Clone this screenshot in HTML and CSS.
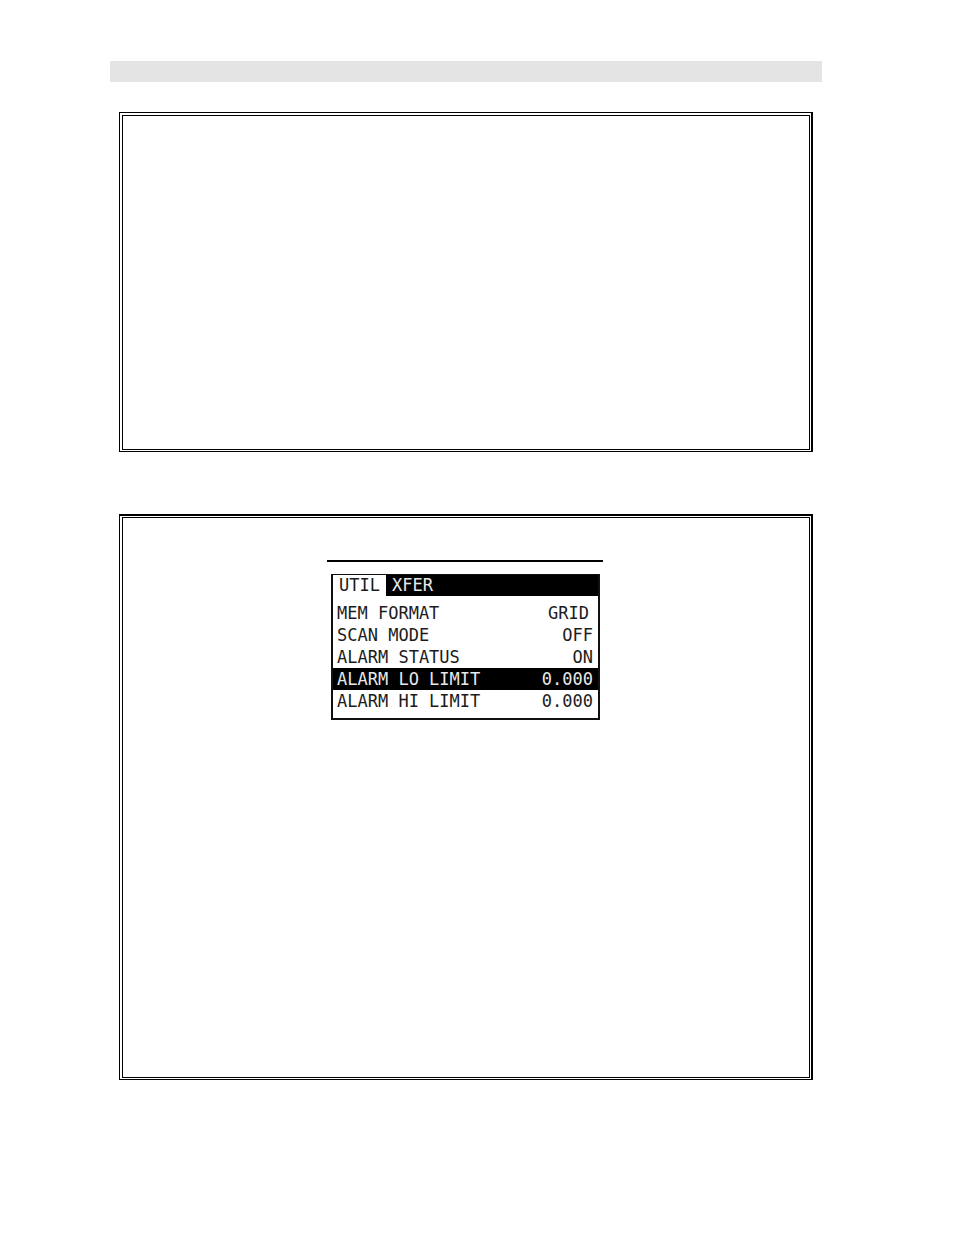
FILE: index.html
```html
<!DOCTYPE html>
<html lang="en">
<head>
    <meta charset="UTF-8">
    <meta name="viewport" content="width=device-width, initial-scale=1.0">
    <title>Alarm Limits</title>
    <link rel="stylesheet" href="styles.css">
</head>
<body>
    <header class="page-bar"></header>

    <main class="panels">
        <section class="panel">
            <div class="panel-body"></div>
        </section>

        <section class="panel panel-alarm">
            <div class="panel-body">
                <div class="figure">
                    <div class="screen">
                        <nav class="tabs">
                            <button type="button" class="tab active">UTIL</button>
                            <button type="button" class="tab">XFER</button>
                        </nav>
                        <table class="menu">
                            <tr><th scope="row">MEM FORMAT</th><td class="word">GRID</td></tr>
                            <tr><th scope="row">SCAN MODE</th><td>OFF</td></tr>
                            <tr><th scope="row">ALARM STATUS</th><td>ON</td></tr>
                            <tr class="selected"><th scope="row">ALARM LO LIMIT</th><td>0.000</td></tr>
                            <tr><th scope="row">ALARM HI LIMIT</th><td>0.000</td></tr>
                        </table>
                    </div>
                </div>
            </div>
        </section>
    </main>
</body>
</html>
```
FILE: styles.css
```css
* {
    box-sizing: border-box;
    margin: 0;
    padding: 0;
}

body {
    background: #fff;
    color: #1c1c1c;
    padding: 61px 132px 60px 110px;
    font-family: "DejaVu Sans Mono", monospace;
    font-size: 17px;
    line-height: 22px;
}

.page-bar {
    height: 21px;
    background: #e4e4e4;
}

.panels {
    display: flex;
    flex-direction: column;
    gap: 62px;
    padding: 30px 9px 0;
}

/* double frame, heavier on the right */
.panel {
    border: 1px solid #000;
    border-right-width: 2px;
    padding: 2px 1px 1px 2px;
}

.panel-body {
    border: 1px solid #000;
    min-height: 335px;
    padding: 42px 2px 0 0;
}

.panel-alarm {
    border-top-width: 2px;
    padding-top: 1px;
}

.panel-alarm .panel-body {
    min-height: 561px;
}

.figure {
    width: 276px;
    margin: 0 auto;
    padding: 12px 3px 0 4px;
    border-top: 2px solid #000;
}

.screen {
    border: 2px solid #111;
    border-top: none;
    padding-bottom: 6px;
}

.tabs {
    display: flex;
    background: #000;
    border-top: 1px solid #111;
    margin-bottom: 6px;
}

.tab {
    border: none;
    background: #000;
    color: #e8e8e8;
    font: inherit;
    line-height: 21px;
    padding: 0 6px;
}

.tab.active {
    background: #fff;
    color: #1c1c1c;
}

.menu {
    width: 100%;
    border-collapse: collapse;
}

.menu th {
    font-weight: normal;
    text-align: left;
    padding-left: 4px;
}

.menu td {
    text-align: right;
    padding-right: 5px;
}

.menu .word {
    padding-right: 9px;
}

.selected {
    background: #000;
    color: #e8e8e8;
}
```
